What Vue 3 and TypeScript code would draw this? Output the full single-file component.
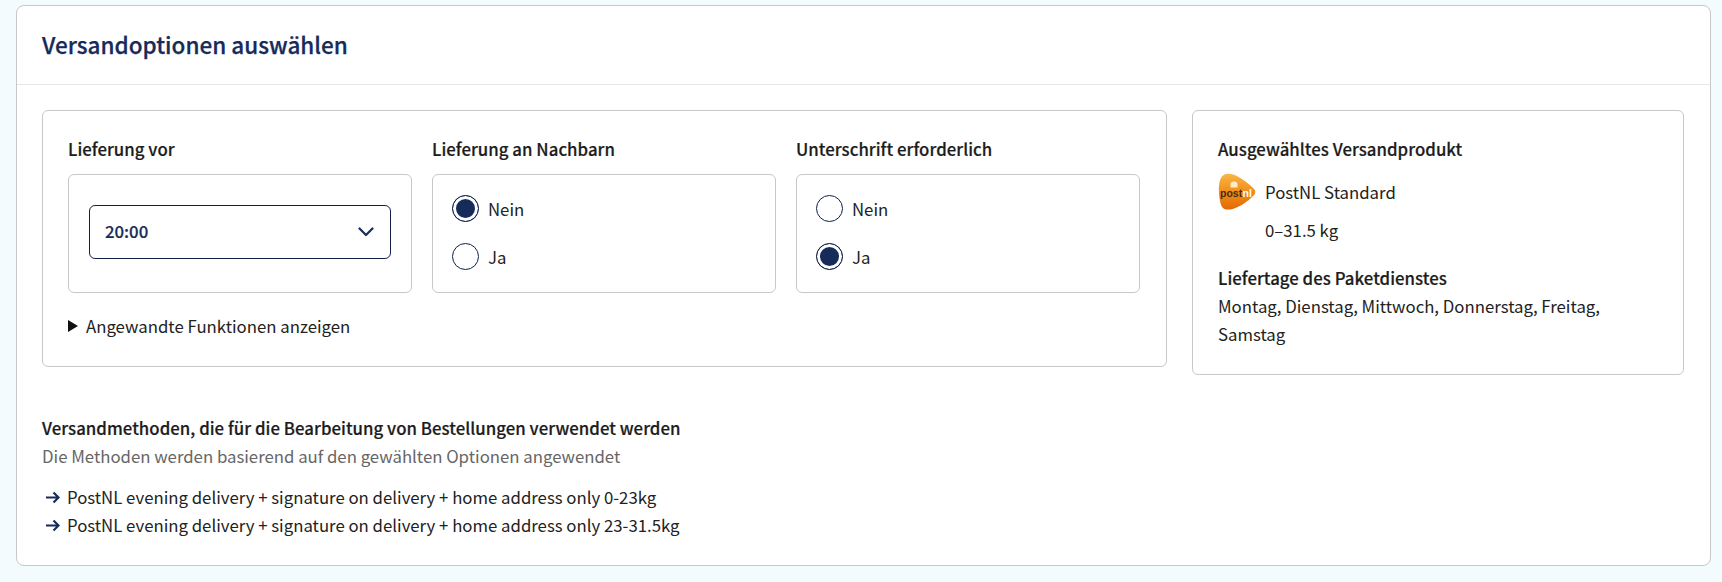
<script setup lang="ts">
interface Choice { label: string; checked: boolean }
const neighbour: Choice[] = [
  { label: 'Nein', checked: true },
  { label: 'Ja', checked: false },
]
const signature: Choice[] = [
  { label: 'Nein', checked: false },
  { label: 'Ja', checked: true },
]
const groups = [
  { title: 'Lieferung an Nachbarn', choices: neighbour },
  { title: 'Unterschrift erforderlich', choices: signature },
]
const methods = [
  'PostNL evening delivery + signature on delivery + home address only 0-23kg',
  'PostNL evening delivery + signature on delivery + home address only 23-31.5kg',
]
</script>

<template>
  <div class="page">
    <section class="card">
      <header class="card-head">
        <h1>Versandoptionen auswählen</h1>
      </header>
      <div class="card-body">
        <div class="top">
          <div class="options">
            <div class="columns">
              <div class="col">
                <div class="label">Lieferung vor</div>
                <div class="box box-select">
                  <div class="select">
                    <span>20:00</span>
                    <svg width="16" height="10" viewBox="0 0 16 10" fill="none">
                      <path d="M1.5 1.5 8 8l6.5-6.5" stroke="#172b5a" stroke-width="2.2" stroke-linecap="round" stroke-linejoin="round" />
                    </svg>
                  </div>
                </div>
              </div>
              <div v-for="g in groups" :key="g.title" class="col">
                <div class="label">{{ g.title }}</div>
                <div class="box box-radio">
                  <div v-for="c in g.choices" :key="c.label" class="radio-row">
                    <span class="radio" :class="{ on: c.checked }"></span>
                    <span>{{ c.label }}</span>
                  </div>
                </div>
              </div>
            </div>
            <div class="summary">
              <span class="tri"></span>
              <span>Angewandte Funktionen anzeigen</span>
            </div>
          </div>
          <aside class="product">
            <div class="label">Ausgewähltes Versandprodukt</div>
            <div class="prod-row">
              <svg class="logo" width="38" height="37" viewBox="0 0 38 37">
                <defs>
                  <linearGradient id="pnl" x1="0" y1="0" x2="0" y2="1">
                    <stop offset="0" stop-color="#f9b64a" />
                    <stop offset="0.55" stop-color="#f08a14" />
                    <stop offset="1" stop-color="#e06a0a" />
                  </linearGradient>
                </defs>
                <path d="M8 1C14 -0.5 23 4 33 13c5.500 4.500 5.500 7 1 11C26 32 15 37.500 8.500 36.500 4 36 2.500 32 1.500 25 .4 18 .6 9 3 5 4 3 6 1.500 8 1Z" fill="url(#pnl)" />
                <path d="M12.500 11.500a3.500 3 0 0 1 7 0v3h-7Z" fill="#fff3d6" opacity="0.9" />
                <text x="2" y="23.500" class="logo-post">post</text>
                <text x="24.500" y="23.500" class="logo-nl">nl</text>
              </svg>
              <span>PostNL Standard</span>
            </div>
            <div class="weight">0–31.5 kg</div>
            <div class="label days-title">Liefertage des Paketdienstes</div>
            <p class="days">Montag, Dienstag, Mittwoch, Donnerstag, Freitag, Samstag</p>
          </aside>
        </div>
        <div class="methods">
          <div class="label">Versandmethoden, die für die Bearbeitung von Bestellungen verwendet werden</div>
          <div class="hint">Die Methoden werden basierend auf den gewählten Optionen angewendet</div>
          <ul>
            <li v-for="m in methods" :key="m">
              <svg width="15" height="13" viewBox="0 0 15 13" fill="none">
                <path d="M1 6.500h12.500M8.500 1.500l5 5-5 5" stroke="#172b5a" stroke-width="2.200" />
              </svg>
              <span>{{ m }}</span>
            </li>
          </ul>
        </div>
      </div>
    </section>
  </div>
</template>

<style>
html, body { margin: 0; background: #f4fbff; }
</style>

<style scoped>
.page {
  box-sizing: border-box;
  width: 1722px;
  height: 582px;
  padding: 5px 11px 16px 16px;
  font-family: "Noto Sans CJK SC", "Noto Sans", sans-serif;
  font-size: 16.78px;
  line-height: 28px;
  color: #222;
  background: #f4fbff;
}
.card {
  box-sizing: border-box;
  height: 100%;
  background: #fff;
  border: 1px solid #c8c8c8;
  border-radius: 8px;
}
.card-head {
  box-sizing: border-box;
  height: 79px;
  padding: 0 25px 2px;
  display: flex;
  align-items: center;
  border-bottom: 1px solid #e6e6e6;
}
h1 {
  margin: 0;
  font-size: 22.5px;
  font-weight: 500;
  color: #172b5a;
  -webkit-text-stroke: 0.25px #172b5a;
}
.card-body { padding: 25px 26px 0 25px; }
.top {
  display: flex;
  align-items: flex-start;
  gap: 25px;
}
.options {
  box-sizing: border-box;
  width: 1125px;
  height: 257px;
  padding: 24px 25px;
  border: 1px solid #c8c8c8;
  border-radius: 6px;
}
.columns {
  display: grid;
  grid-template-columns: repeat(3, 344px);
  gap: 20px;
}
.label {
  font-weight: 500;
  color: #1c1c1c;
  line-height: 28px;
  letter-spacing: 0.045px;
  -webkit-text-stroke: 0.2px #1c1c1c;
}
.box {
  box-sizing: border-box;
  height: 119px;
  margin-top: 11px;
  border: 1px solid #c8c8c8;
  border-radius: 6px;
}
.box-select {
  display: flex;
  align-items: center;
  padding: 0 20px 3px;
}
.select {
  box-sizing: border-box;
  flex: 1;
  height: 54px;
  padding: 0 16px 2px 15px;
  display: flex;
  align-items: center;
  justify-content: space-between;
  border: 1px solid #0f1f48;
  border-radius: 6px;
  font-weight: 500;
  color: #172b5a;
  -webkit-text-stroke: 0.2px #172b5a;
}
.select svg { margin-top: 1px; }
.box-radio {
  display: flex;
  flex-direction: column;
  justify-content: center;
  gap: 21px;
  padding: 0 19px 2px;
}
.radio-row {
  display: flex;
  align-items: center;
  gap: 9px;
  height: 27px;
}
.radio {
  box-sizing: border-box;
  width: 27px;
  height: 27px;
  border: 1px solid #0f1f48;
  border-radius: 50%;
  background: #fff;
}
.radio.on {
  background: #172b5a;
  box-shadow: inset 0 0 0 3px #fff;
}
.summary {
  display: flex;
  align-items: center;
  gap: 8px;
  margin-top: 19px;
}
.tri {
  width: 0;
  height: 0;
  border-left: 10px solid #111;
  border-top: 6.5px solid transparent;
  border-bottom: 6.5px solid transparent;
}
.product {
  box-sizing: border-box;
  width: 492px;
  height: 265px;
  padding: 24px 25px 0;
  border: 1px solid #c8c8c8;
  border-radius: 6px;
}
.prod-row {
  display: flex;
  align-items: center;
  gap: 9px;
  height: 37px;
  margin-top: 10px;
}
.logo-post, .logo-nl {
  font-size: 10.5px;
  font-weight: 700;
  font-family: "Liberation Sans", sans-serif;
}
.logo-post { fill: #4a2a10; }
.logo-nl { fill: #fff; }
.weight {
  margin-top: 6px;
  padding-left: 47px;
}
.days-title { margin-top: 20px; }
.days { margin: 0; width: 420px; }
.methods { margin-top: 40px; }
.methods .label { line-height: 26px; }
.hint { color: #666; line-height: 30px; }
ul {
  list-style: none;
  margin: 12px 0 0;
  padding: 0 0 0 3px;
}
li {
  display: flex;
  align-items: center;
  gap: 7px;
  height: 28px;
}
</style>
